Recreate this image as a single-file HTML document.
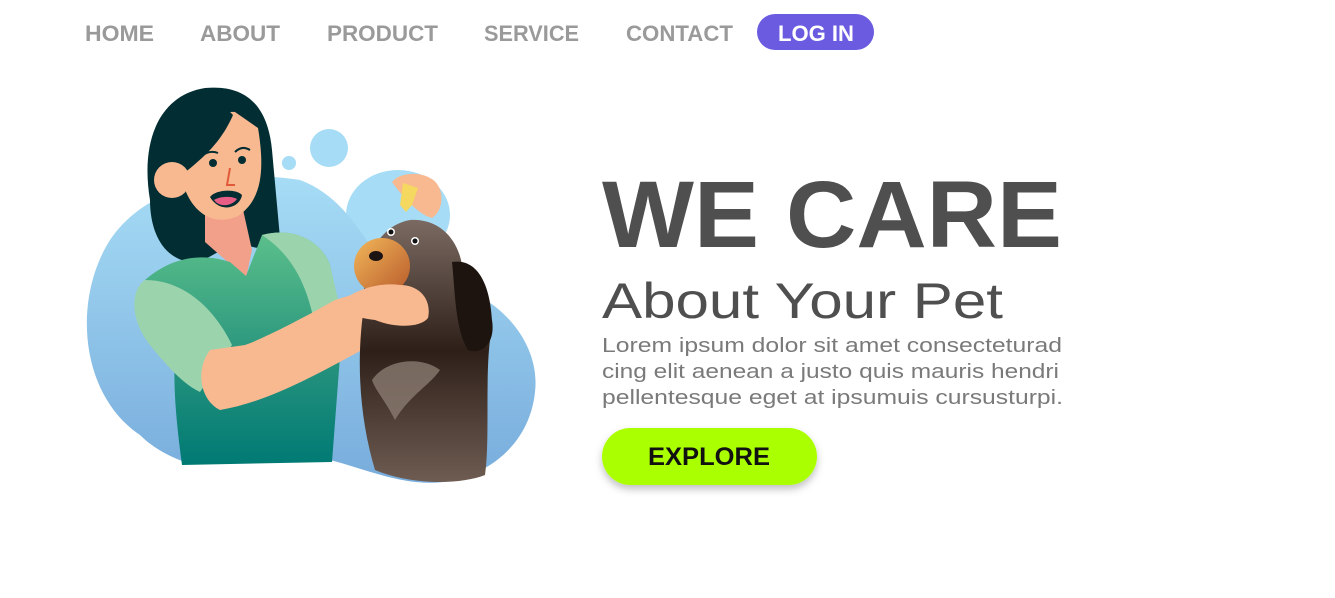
<!DOCTYPE html>
<html><head><meta charset="utf-8"><style>
html,body{margin:0;padding:0;background:#fff;width:1335px;height:598px;overflow:hidden}
svg{display:block}
</style></head><body>
<svg width="1335" height="598" viewBox="0 0 1335 598" xmlns="http://www.w3.org/2000/svg">
<defs>
<linearGradient id="bl" x1="0" y1="0" x2="0" y2="1"><stop offset="0" stop-color="#a6dcf5"/><stop offset="1" stop-color="#78acdc"/></linearGradient>
<linearGradient id="sh" x1="0" y1="0" x2="0" y2="1"><stop offset="0" stop-color="#5cc08b"/><stop offset="0.6" stop-color="#23907c"/><stop offset="1" stop-color="#007a74"/></linearGradient>
<linearGradient id="dg" x1="0" y1="0" x2="0" y2="1"><stop offset="0" stop-color="#7a6a62"/><stop offset="0.5" stop-color="#2e2019"/><stop offset="1" stop-color="#6e5c52"/></linearGradient>
<linearGradient id="mz" x1="0" y1="0" x2="1" y2="1"><stop offset="0" stop-color="#f2b75a"/><stop offset="1" stop-color="#b85a2a"/></linearGradient>
<filter id="shd" x="-20%" y="-30%" width="140%" height="170%"><feDropShadow dx="0" dy="4" stdDeviation="4" flood-color="#000" flood-opacity="0.25"/></filter>
</defs>

<g font-family="Liberation Sans, sans-serif" font-weight="bold" font-size="22" fill="#9a9a9a">
<text x="85" y="41" textLength="69" lengthAdjust="spacingAndGlyphs">HOME</text>
<text x="200" y="41" textLength="80" lengthAdjust="spacingAndGlyphs">ABOUT</text>
<text x="327" y="41" textLength="111" lengthAdjust="spacingAndGlyphs">PRODUCT</text>
<text x="484" y="41" textLength="95" lengthAdjust="spacingAndGlyphs">SERVICE</text>
<text x="626" y="41" textLength="107" lengthAdjust="spacingAndGlyphs">CONTACT</text>
</g>
<rect x="757" y="14" width="117" height="36" rx="18" fill="#6a5be0"/>
<text x="778" y="41" font-family="Liberation Sans, sans-serif" font-weight="bold" font-size="22" fill="#fff" textLength="76" lengthAdjust="spacingAndGlyphs">LOG IN</text>

<circle cx="329" cy="148" r="19" fill="#a6dcf5"/>
<circle cx="289" cy="163" r="7" fill="#a6dcf5"/>
<ellipse cx="398" cy="215" rx="52" ry="45" fill="#a6dcf5"/>
<path d="M140,435 C80,395 72,300 110,240 C150,180 240,170 300,180 C340,195 360,230 385,268 C400,285 420,280 445,282 C510,300 540,350 535,392 C530,440 495,470 455,480 C410,490 370,470 330,460 C280,450 230,470 185,462 C165,455 150,445 140,435 Z" fill="url(#bl)"/>

<path d="M150,200 C140,140 160,95 205,88 C248,84 268,108 272,150 L280,238 C272,252 250,250 240,240 L200,262 C170,265 150,240 150,200 Z" fill="#022d33"/>
<path d="M205,210 L242,205 L252,250 L246,278 L205,242 Z" fill="#f2a08a"/>
<path d="M145,280 C170,258 200,252 230,262 L246,276 L262,235 C295,226 322,242 330,265 L342,330 L332,462 L182,465 C176,420 172,380 176,340 Z" fill="url(#sh)"/>
<path d="M262,235 C295,226 322,242 330,265 L345,330 L318,345 C312,300 300,260 262,235 Z" fill="#9bd3ad"/>
<path d="M145,280 C130,290 130,320 150,345 C170,370 185,385 200,392 L232,345 C215,310 185,280 145,280 Z" fill="#9bd3ad"/>
<path d="M210,350 C195,370 200,400 220,410 C280,400 340,360 400,330 L430,320 C428,300 410,285 390,283 L335,300 C300,320 260,340 245,345 Z" fill="#f8b990"/>
<path d="M185,150 C195,125 220,110 235,112 L258,128 C265,170 262,200 238,216 C215,226 196,215 186,192 Z" fill="#f8b990"/>
<path d="M178,110 C200,95 225,105 233,115 C220,145 200,160 182,175 Z" fill="#022d33"/>
<circle cx="172" cy="180" r="18" fill="#f8b990"/>
<circle cx="213" cy="163" r="4" fill="#022d33"/>
<circle cx="242" cy="160" r="4" fill="#022d33"/>
<path d="M203,155 Q210,150 218,153 M235,152 Q242,145 250,150" stroke="#022d33" stroke-width="2" fill="none"/>
<path d="M230,168 L227,185 L235,185" stroke="#e05a3a" stroke-width="2" fill="none"/>
<path d="M210,197 C215,190 235,188 242,195 C240,208 220,214 210,197 Z" fill="#022d33"/>
<path d="M214,200 C220,196 232,196 237,199 C232,206 220,208 214,200 Z" fill="#e85d85"/>

<path d="M365,300 C360,260 380,225 410,220 C440,218 458,240 462,265 C482,272 495,300 490,340 C485,380 490,440 485,475 C460,485 410,485 375,470 C360,420 355,360 365,300 Z" fill="url(#dg)"/>
<path d="M452,262 C478,258 490,285 492,320 C496,345 480,355 468,350 C455,330 455,290 452,262 Z" fill="#1e140f"/>
<path d="M372,380 C385,360 420,355 440,370 C430,385 410,395 395,420 C385,400 375,390 372,380 Z" fill="#8a7a70" opacity="0.8"/>
<circle cx="382" cy="266" r="28" fill="url(#mz)"/>
<ellipse cx="376" cy="256" rx="7" ry="5" fill="#1c1412"/>
<circle cx="391" cy="232" r="4" fill="#fff"/><circle cx="391" cy="232" r="2.5" fill="#111"/>
<circle cx="415" cy="241" r="4" fill="#fff"/><circle cx="415" cy="241" r="2.5" fill="#111"/>
<path d="M340,305 C350,290 380,282 400,285 C420,285 432,300 428,318 C420,328 395,328 375,320 C360,318 345,315 340,305 Z" fill="#f8b990"/>
<path d="M392,182 C400,172 420,172 430,178 C445,185 445,210 432,218 C420,215 405,200 392,182 Z" fill="#f8b990"/>
<path d="M403,183 L418,188 L412,205 L406,212 L400,205 Z" fill="#f5d860"/>

<text x="602" y="247" font-family="Liberation Sans, sans-serif" font-weight="bold" font-size="95" fill="#4f4f4f" textLength="460" lengthAdjust="spacingAndGlyphs">WE CARE</text>
<text x="602" y="318" font-family="Liberation Sans, sans-serif" font-size="50" fill="#4f4f4f" textLength="401" lengthAdjust="spacingAndGlyphs">About Your Pet</text>
<g font-family="Liberation Sans, sans-serif" font-size="20" fill="#7a7a7a">
<text x="602" y="352" textLength="460" lengthAdjust="spacingAndGlyphs">Lorem ipsum dolor sit amet consecteturad</text>
<text x="602" y="378" textLength="457" lengthAdjust="spacingAndGlyphs">cing elit aenean a justo quis mauris hendri</text>
<text x="602" y="404" textLength="461" lengthAdjust="spacingAndGlyphs">pellentesque eget at ipsumuis cursusturpi.</text>
</g>
<rect x="602" y="428" width="215" height="57" rx="28.5" fill="#aaff00" filter="url(#shd)"/>
<text x="648" y="465" font-family="Liberation Sans, sans-serif" font-weight="bold" font-size="25" fill="#111" textLength="122" lengthAdjust="spacingAndGlyphs">EXPLORE</text>
</svg>
</body></html>
